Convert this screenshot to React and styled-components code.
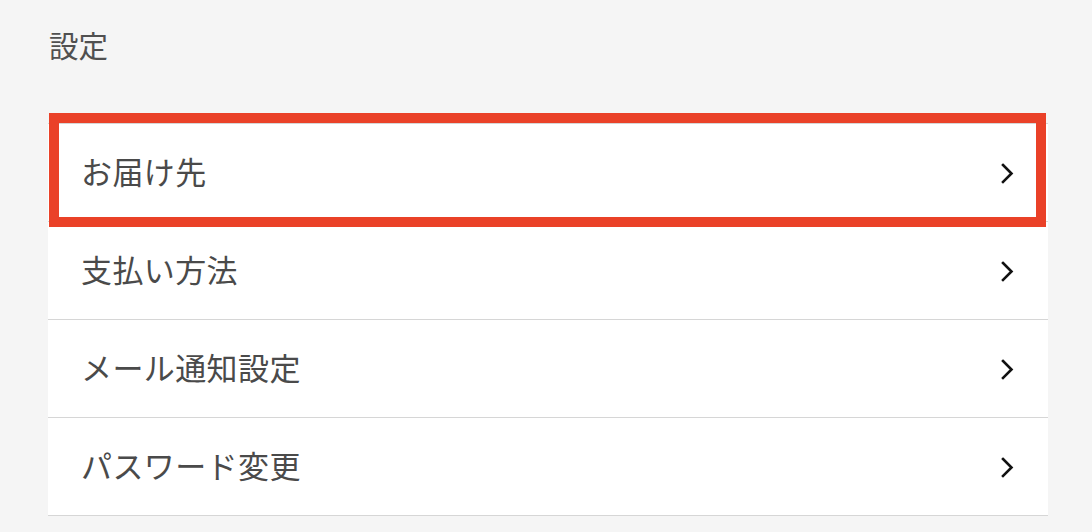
import React from "react";
import styled, { createGlobalStyle } from "styled-components";

const GlobalStyle = createGlobalStyle`
  body {
    margin: 0;
    background: #f5f5f5;
    font-family: "Noto Sans CJK JP", "Noto Sans", sans-serif;
  }
`;

const Page = styled.div`
  padding: 24px 44px 0 48px;
  width: 1000px;
`;

const Title = styled.h1`
  margin: 0 0 0 1px;
  height: 42px;
  font-size: 29.5px;
  line-height: 40px;
  font-weight: 400;
  color: #505050;
`;

const List = styled.ul`
  list-style: none;
  margin: 57px 0 0;
  padding: 0;
  border-top: 1px solid #d6d6d6;
  background: #fff;
`;

const Row = styled.li`
  position: relative;
  height: 98px;
  box-sizing: border-box;
  display: flex;
  align-items: center;
  justify-content: space-between;
  padding: 0 34px 4px 33px;
  border-bottom: 1px solid #d6d6d6;
  cursor: pointer;
`;

const Label = styled.span`
  font-size: 31px;
  color: #4a4a4a;
  letter-spacing: 0.4px;
`;

const Highlight = styled.div`
  position: absolute;
  top: -11px;
  left: 1px;
  width: 997px;
  height: 114px;
  box-sizing: border-box;
  border: 10px solid #ea4128;
  pointer-events: none;
`;

const Chevron = () => (
  <svg width="14" height="22" viewBox="0 0 14 22" fill="none" style={{ marginTop: 4 }}>
    <polyline
      points="3,3 11.5,11.5 3,20"
      stroke="#111"
      strokeWidth="2.6"
      strokeLinecap="square"
      strokeLinejoin="miter"
    />
  </svg>
);

const items = ["お届け先", "支払い方法", "メール通知設定", "パスワード変更"];

const App = () => {
  return (
    <Page>
      <GlobalStyle />
      <Title>設定</Title>
      <List>
        {items.map((item, i) => (
          <Row key={item}>
            <Label>{item}</Label>
            <Chevron />
            {i === 0 && <Highlight />}
          </Row>
        ))}
      </List>
    </Page>
  );
};

export default App;
